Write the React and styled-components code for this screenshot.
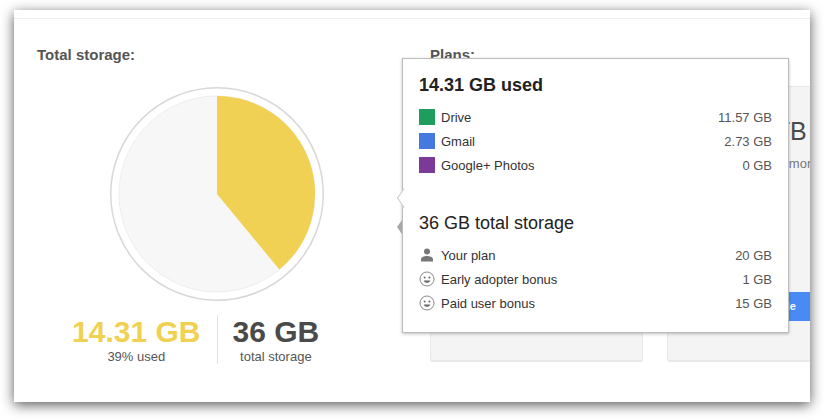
import React from 'react';
import styled, { createGlobalStyle } from 'styled-components';

const usedRows = [
  { label: 'Drive', value: '11.57 GB', color: '#1f9d5c' },
  { label: 'Gmail', value: '2.73 GB', color: '#4479e0' },
  { label: 'Google+ Photos', value: '0 GB', color: '#7b3a98' },
];

const totalRows = [
  { label: 'Your plan', value: '20 GB', icon: 'person' },
  { label: 'Early adopter bonus', value: '1 GB', icon: 'smile' },
  { label: 'Paid user bonus', value: '15 GB', icon: 'smile' },
];

const PersonIcon = () => (
  <svg width="16" height="16" viewBox="0 0 16 16">
    <circle cx="8" cy="4.4" r="3" fill="#777" />
    <path d="M2 14.5v-2.2c0-2 3.4-3.2 6-3.2s6 1.2 6 3.2v2.2z" fill="#777" />
  </svg>
);

const SmileIcon = () => (
  <svg width="16" height="16" viewBox="0 0 16 16">
    <circle cx="8" cy="8" r="7" fill="none" stroke="#888" strokeWidth="1" />
    <circle cx="5.6" cy="6.4" r="1" fill="#666" />
    <circle cx="10.4" cy="6.4" r="1" fill="#666" />
    <path d="M4.6 9.4c.7 1.6 2 2.3 3.4 2.3s2.7-.7 3.4-2.3z" fill="#666" />
  </svg>
);

const PieChart = () => (
  <svg width="216" height="216" viewBox="0 0 216 216">
    <circle cx="108" cy="108" r="106.25" fill="#fff" stroke="#d8d8d8" strokeWidth="1.5" />
    <circle cx="108" cy="108" r="98" fill="#f7f7f7" stroke="#eeeeee" strokeWidth="1" />
    <path d="M108 108V10A98 98 0 0 1 170.4 183.6z" fill="#f1d153" />
  </svg>
);

const App = () => (
  <Page>
    <GlobalStyle />
    <Card>
      <TopStrip />
      <Main>
        <StorageColumn>
          <SectionTitle>Total storage:</SectionTitle>
          <PieWrap>
            <PieChart />
          </PieWrap>
          <Stats>
            <Stat>
              <StatValue $used>14.31 GB</StatValue>
              <StatLabel>39% used</StatLabel>
            </Stat>
            <Stat $divided>
              <StatValue>36 GB</StatValue>
              <StatLabel>total storage</StatLabel>
            </Stat>
          </Stats>
        </StorageColumn>
        <PlansColumn>
          <SectionTitle>Plans:</SectionTitle>
          <PlanRow>
            <PlanCard />
            <PlanCard>
              <PlanSize>10 TB</PlanSize>
              <PlanNote>Get even more</PlanNote>
              <PlanButton>Upgrade</PlanButton>
            </PlanCard>
          </PlanRow>
        </PlansColumn>
      </Main>
      <Popover>
        <ArrowOpen />
        <ArrowSolid />
        <UsedHeading>14.31 GB used</UsedHeading>
        <RowList>
          {usedRows.map(row => (
            <Row key={row.label}>
              <IconSlot><Swatch $color={row.color} /></IconSlot>
              <RowLabel>{row.label}</RowLabel>
              <RowValue>{row.value}</RowValue>
            </Row>
          ))}
        </RowList>
        <TotalHeading>36 GB total storage</TotalHeading>
        <RowList>
          {totalRows.map(row => (
            <Row key={row.label}>
              <IconSlot>{row.icon === 'person' ? <PersonIcon /> : <SmileIcon />}</IconSlot>
              <RowLabel>{row.label}</RowLabel>
              <RowValue>{row.value}</RowValue>
            </Row>
          ))}
        </RowList>
      </Popover>
    </Card>
  </Page>
);

const GlobalStyle = createGlobalStyle`
  html, body {
    margin: 0;
    padding: 0;
    background: #fff;
  }

  body {
    font-family: "Liberation Sans", Arial, sans-serif;
  }
`;

const Page = styled.div`
  width: 824px;
  height: 420px;
  padding: 10px 14px 18px;
  box-sizing: border-box;
  overflow: hidden;
`;

const Card = styled.div`
  position: relative;
  display: flex;
  flex-direction: column;
  height: 392px;
  background: #fff;
  box-shadow: 0 3px 12px rgba(0, 0, 0, 0.65);
`;

const TopStrip = styled.div`
  height: 8px;
  flex-shrink: 0;
  border-bottom: 1px solid #ececec;
`;

const Main = styled.div`
  display: flex;
  flex: 1;
  min-height: 0;
  padding: 27px 0 0 23px;
  overflow: hidden;
`;

const StorageColumn = styled.div`
  display: flex;
  flex-direction: column;
  width: 359px;
  margin-right: 34px;
  flex-shrink: 0;
`;

const SectionTitle = styled.h2`
  margin: 0;
  height: 18px;
  font-size: 15px;
  line-height: 18px;
  font-weight: 700;
  color: #555;
`;

const PieWrap = styled.div`
  display: flex;
  justify-content: center;
  margin-top: 22px;
  height: 216px;
`;

const Stats = styled.div`
  display: grid;
  grid-template-columns: 1fr 1fr;
  margin-top: 13px;
`;

const Stat = styled.div`
  display: flex;
  flex-direction: column;
  align-items: center;
  height: 49px;
  justify-self: ${props => (props.$divided ? 'start' : 'end')};
  padding: ${props => (props.$divided ? '0 0 0 15px' : '0 16px 0 0')};
  border-left: ${props => (props.$divided ? '1px solid #e2e2e2' : 'none')};
`;

const StatValue = styled.div`
  margin-top: 2px;
  font-size: 30px;
  line-height: 30px;
  font-weight: 700;
  color: ${props => (props.$used ? '#f1d153' : '#4a4a4a')};
`;

const StatLabel = styled.div`
  margin-top: 3px;
  font-size: 13px;
  line-height: 14px;
  color: #555;
`;

const PlansColumn = styled.div`
  display: flex;
  flex-direction: column;
  min-width: 0;
  flex: 1;
`;

const PlanRow = styled.div`
  display: flex;
  gap: 24px;
  margin-top: 22px;
`;

const PlanCard = styled.div`
  display: flex;
  flex-direction: column;
  align-items: center;
  flex-shrink: 0;
  width: 213px;
  height: 276px;
  box-sizing: border-box;
  background: #f4f4f4;
  border: 1px solid #e8e8e8;
  border-bottom-width: 2px;
  border-radius: 3px;
`;

const PlanSize = styled.div`
  margin-top: 28px;
  font-size: 25px;
  line-height: 32px;
  color: #4a4a4a;
`;

const PlanNote = styled.div`
  margin-top: 9px;
  padding-left: 4px;
  font-size: 13px;
  line-height: 16px;
  color: #777;
  white-space: nowrap;
`;

const PlanButton = styled.div`
  margin-top: 120px;
  width: 120px;
  height: 29px;
  background: #4a8af4;
  color: #fff;
  font-size: 11px;
  font-weight: 700;
  line-height: 29px;
  text-align: center;
  border-radius: 2px;
`;

const Popover = styled.div`
  position: absolute;
  left: 388px;
  top: 48px;
  width: 387px;
  height: 275px;
  box-sizing: border-box;
  padding: 16px 16px 0;
  background: #fff;
  border: 1px solid #bcbcbc;
  box-shadow: 0 1px 3px rgba(0, 0, 0, 0.25);
`;

const ArrowOpen = styled.div`
  position: absolute;
  left: -6px;
  top: 132px;
  width: 13px;
  height: 13px;
  background: #fff;
  border-left: 1px solid #c4c4c4;
  border-bottom: 1px solid #c4c4c4;
  transform: scaleX(0.7) rotate(45deg);
`;

const ArrowSolid = styled.div`
  position: absolute;
  left: -6px;
  top: 161px;
  width: 0;
  height: 0;
  border-top: 7px solid transparent;
  border-bottom: 7px solid transparent;
  border-right: 5px solid #a8a8a8;
`;

const UsedHeading = styled.div`
  font-size: 18px;
  line-height: 20px;
  font-weight: 700;
  color: #222;
`;

const TotalHeading = styled.div`
  margin-top: 36px;
  font-size: 18px;
  line-height: 20px;
  color: #222;
`;

const RowList = styled.div`
  margin-top: 10px;
`;

const Row = styled.div`
  display: flex;
  align-items: center;
  height: 24px;
  font-size: 13px;
`;

const IconSlot = styled.div`
  display: flex;
  align-items: center;
  width: 22px;
  flex-shrink: 0;
`;

const Swatch = styled.div`
  width: 16px;
  height: 16px;
  background: ${props => props.$color};
`;

const RowLabel = styled.div`
  flex: 1;
  color: #333;
`;

const RowValue = styled.div`
  color: #555;
`;

export default App;
